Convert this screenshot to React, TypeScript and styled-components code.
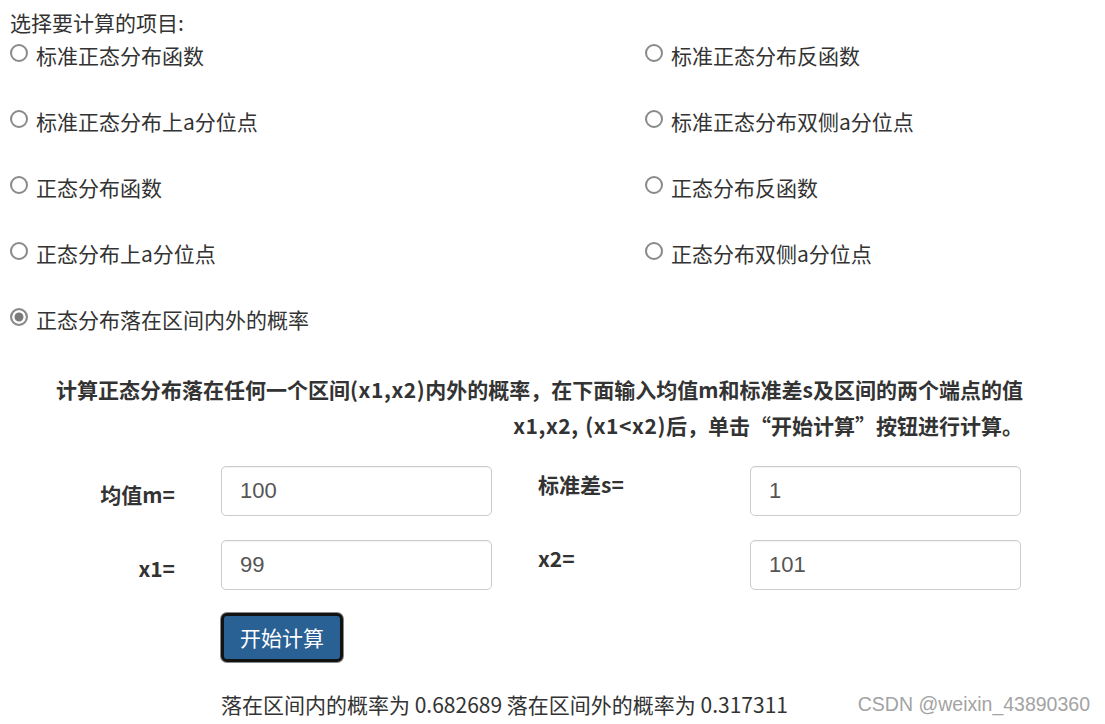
import React, { useState } from "react";
import styled, { createGlobalStyle } from "styled-components";

const Global = createGlobalStyle`
  html, body { margin: 0; padding: 0; background: #fff; }
  body {
    font-family: "Noto Sans CJK SC", "Noto Sans", sans-serif;
    color: #333;
    font-size: 21px;
  }
`;

const Page = styled.div`
  width: 1105px;
  height: 724px;
  overflow: hidden;
  box-sizing: border-box;
  padding-top: 7px;
`;

const Title = styled.div`
  padding-left: 10px;
  line-height: 30px;
`;

const OptionGrid = styled.div`
  display: grid;
  grid-template-columns: 635px 1fr;
  row-gap: 30px;
  padding-left: 10px;
`;

const Option = styled.label`
  display: flex;
  align-items: center;
  height: 36px;
  line-height: 36px;
  white-space: nowrap;
`;

const Radio = styled.input.attrs({ type: "radio" })`
  appearance: none;
  -webkit-appearance: none;
  box-sizing: border-box;
  width: 18px;
  height: 18px;
  min-width: 18px;
  margin: 0 8px 0 0;
  border: 2px solid #8a8a8a;
  border-radius: 50%;
  background: #fff;
  flex: none;
  position: relative;
  top: -2px;
  &:checked {
    background: #7a7a7a;
    box-shadow: inset 0 0 0 2.5px #fff;
  }
`;

const Intro = styled.p`
  margin: 34px 0 0;
  padding-right: 82px;
  text-align: right;
  font-weight: 700;
  line-height: 36px;
  white-space: nowrap;
  word-spacing: 1px;
`;

const Latin = styled.span`
  letter-spacing: 0.6px;
`;

const Form = styled.div`
  display: grid;
  grid-template-columns: 221px 271px 258px 271px;
  row-gap: 24px;
  margin-top: 23px;
`;

const FieldLabel = styled.div<{ $side: "left" | "right" }>`
  font-weight: 700;
  line-height: 36px;
  align-self: start;
  box-sizing: border-box;
  text-align: ${(p) => (p.$side === "left" ? "right" : "left")};
  padding: ${(p) => (p.$side === "left" ? "10px 46px 0 0" : "0 0 0 46px")};
`;

const Field = styled.input`
  box-sizing: border-box;
  width: 271px;
  height: 50px;
  border: 1px solid #cccccc;
  border-radius: 5px;
  padding: 0 18px;
  font-family: "Liberation Sans", Arial, sans-serif;
  font-size: 22px;
  color: #555;
  outline: none;
  box-shadow: inset 0 1px 1px rgba(0, 0, 0, 0.05);
`;

const ButtonRow = styled.div`
  padding-left: 221px;
  margin-top: 23px;
`;

const CalcButton = styled.button`
  box-sizing: border-box;
  width: 122px;
  height: 49px;
  background: #2a6195;
  color: #fff;
  border: 3px solid #121212;
  border-radius: 6px;
  box-shadow: 0 0 0 1px #888;
  font-family: "Noto Sans CJK SC", sans-serif;
  font-size: 21px;
  line-height: 1;
  padding: 0;
  cursor: pointer;
`;

const ResultRow = styled.div`
  display: flex;
  justify-content: space-between;
  align-items: center;
  padding: 0 15px 0 221px;
  margin-top: 24px;
  line-height: 36px;
`;

const Watermark = styled.span`
  font-family: "Liberation Sans", Arial, sans-serif;
  font-size: 19.5px;
  color: #a3a3a3;
`;

const options = [
  "标准正态分布函数",
  "标准正态分布反函数",
  "标准正态分布上a分位点",
  "标准正态分布双侧a分位点",
  "正态分布函数",
  "正态分布反函数",
  "正态分布上a分位点",
  "正态分布双侧a分位点",
  "正态分布落在区间内外的概率",
];

export default function App() {
  const [sel, setSel] = useState(8);
  return (
    <Page>
      <Global />
      <Title>选择要计算的项目:</Title>
      <OptionGrid>
        {options.map((o, i) => (
          <Option key={o}>
            <Radio name="opt" checked={sel === i} onChange={() => setSel(i)} />
            {o}
          </Option>
        ))}
      </OptionGrid>
      <Intro>
        计算正态分布落在任何一个区间<Latin>(x1,x2)</Latin>内外的概率，在下面输入均值m和标准差s及区间的两个端点的值
        <br />
        <Latin>x1,x2, (x1&lt;x2)</Latin>后，单击“开始计算”按钮进行计算。
      </Intro>
      <Form>
        <FieldLabel $side="left">均值m=</FieldLabel>
        <Field defaultValue="100" />
        <FieldLabel $side="right">标准差s=</FieldLabel>
        <Field defaultValue="1" />
        <FieldLabel $side="left">x1=</FieldLabel>
        <Field defaultValue="99" />
        <FieldLabel $side="right">x2=</FieldLabel>
        <Field defaultValue="101" />
      </Form>
      <ButtonRow>
        <CalcButton>开始计算</CalcButton>
      </ButtonRow>
      <ResultRow>
        <span>落在区间内的概率为 0.682689 落在区间外的概率为 0.317311</span>
        <Watermark>CSDN @weixin_43890360</Watermark>
      </ResultRow>
    </Page>
  );
}
